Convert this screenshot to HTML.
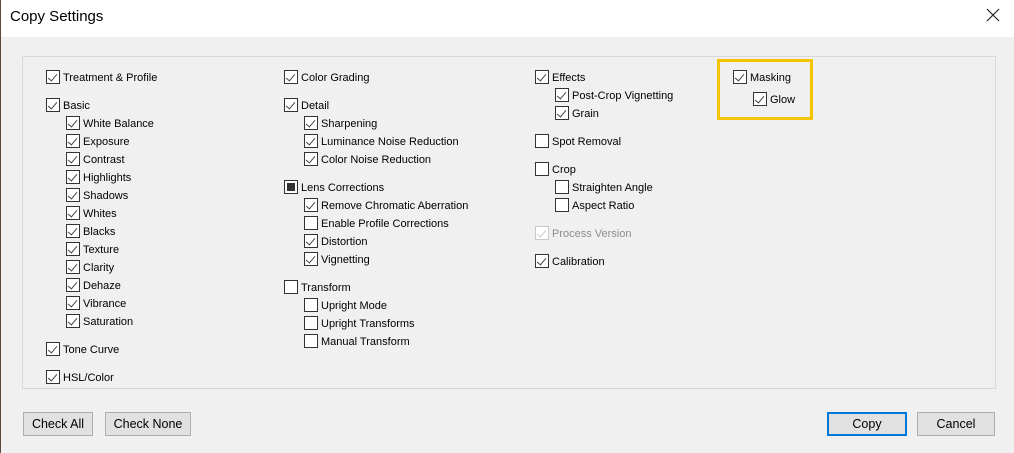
<!DOCTYPE html>
<html><head><meta charset="utf-8"><style>
*{margin:0;padding:0;box-sizing:border-box}
body{width:1014px;height:453px;background:#f0f0f0;position:relative;overflow:hidden;font-family:"Liberation Sans",sans-serif;font-size:11px;color:#000}
.title{position:absolute;left:0;top:0;width:1014px;height:37px;background:#fff}
.title span{position:absolute;left:10px;top:8px;font-size:15px}
.x{position:absolute;right:14px;top:8px}
.lb{position:absolute;left:0;top:0;width:1px;height:453px;background:#5a4a3a}
.panel{position:absolute;left:22px;top:56px;width:974px;height:333px;border:1px solid #d9d9d9}
.c{position:absolute;height:18px;line-height:20px;white-space:nowrap;padding-left:17px}
.c i{position:absolute;left:0;top:2px;width:14px;height:14px;border:1px solid #333;background:#fff}
.c.k i::after{content:"";position:absolute;left:3px;top:1px;width:4px;height:8px;border-right:1.5px solid #444;border-bottom:1.5px solid #444;transform:rotate(40deg)}
.c.m i::after{content:"";position:absolute;left:2px;top:2px;width:8px;height:8px;background:#333}
.c.d{color:#8c8c8c}
.c.d i{border-color:#c8c8c8}
.c.d i::after{border-color:#c8c8c8}
.hl{position:absolute;left:717px;top:59px;width:96px;height:61px;border:3px solid #f5c400}
.b{position:absolute;top:412px;height:24px;border:1px solid #adadad;background:#e1e1e1;text-align:center;line-height:22px;font-size:12.5px}
</style></head><body>
<div class="title"><span>Copy Settings</span>
<svg class="x" width="14" height="14" viewBox="0 0 14 14"><path d="M1 1L13 13M13 1L1 13" stroke="#222" stroke-width="1.2"/></svg></div>
<div class="lb"></div>
<div class="panel"></div>
<div class="hl"></div>

<div class="c k" style="left:46px;top:68px"><i></i>Treatment &amp; Profile</div>
<div class="c k" style="left:46px;top:96px"><i></i>Basic</div>
<div class="c k" style="left:66px;top:114px"><i></i>White Balance</div>
<div class="c k" style="left:66px;top:132px"><i></i>Exposure</div>
<div class="c k" style="left:66px;top:150px"><i></i>Contrast</div>
<div class="c k" style="left:66px;top:168px"><i></i>Highlights</div>
<div class="c k" style="left:66px;top:186px"><i></i>Shadows</div>
<div class="c k" style="left:66px;top:204px"><i></i>Whites</div>
<div class="c k" style="left:66px;top:222px"><i></i>Blacks</div>
<div class="c k" style="left:66px;top:240px"><i></i>Texture</div>
<div class="c k" style="left:66px;top:258px"><i></i>Clarity</div>
<div class="c k" style="left:66px;top:276px"><i></i>Dehaze</div>
<div class="c k" style="left:66px;top:294px"><i></i>Vibrance</div>
<div class="c k" style="left:66px;top:312px"><i></i>Saturation</div>
<div class="c k" style="left:46px;top:340px"><i></i>Tone Curve</div>
<div class="c k" style="left:46px;top:368px"><i></i>HSL/Color</div>

<div class="c k" style="left:284px;top:68px"><i></i>Color Grading</div>
<div class="c k" style="left:284px;top:96px"><i></i>Detail</div>
<div class="c k" style="left:304px;top:114px"><i></i>Sharpening</div>
<div class="c k" style="left:304px;top:132px"><i></i>Luminance Noise Reduction</div>
<div class="c k" style="left:304px;top:150px"><i></i>Color Noise Reduction</div>
<div class="c m" style="left:284px;top:178px"><i></i>Lens Corrections</div>
<div class="c k" style="left:304px;top:196px"><i></i>Remove Chromatic Aberration</div>
<div class="c" style="left:304px;top:214px"><i></i>Enable Profile Corrections</div>
<div class="c k" style="left:304px;top:232px"><i></i>Distortion</div>
<div class="c k" style="left:304px;top:250px"><i></i>Vignetting</div>
<div class="c" style="left:284px;top:278px"><i></i>Transform</div>
<div class="c" style="left:304px;top:296px"><i></i>Upright Mode</div>
<div class="c" style="left:304px;top:314px"><i></i>Upright Transforms</div>
<div class="c" style="left:304px;top:332px"><i></i>Manual Transform</div>

<div class="c k" style="left:535px;top:68px"><i></i>Effects</div>
<div class="c k" style="left:555px;top:86px"><i></i>Post-Crop Vignetting</div>
<div class="c k" style="left:555px;top:104px"><i></i>Grain</div>
<div class="c" style="left:535px;top:132px"><i></i>Spot Removal</div>
<div class="c" style="left:535px;top:160px"><i></i>Crop</div>
<div class="c" style="left:555px;top:178px"><i></i>Straighten Angle</div>
<div class="c" style="left:555px;top:196px"><i></i>Aspect Ratio</div>
<div class="c k d" style="left:535px;top:224px"><i></i>Process Version</div>
<div class="c k" style="left:535px;top:252px"><i></i>Calibration</div>

<div class="c k" style="left:733px;top:68px"><i></i>Masking</div>
<div class="c k" style="left:753px;top:90px"><i></i>Glow</div>

<div class="b" style="left:23px;width:70px">Check All</div>
<div class="b" style="left:105px;width:86px">Check None</div>
<div class="b" style="left:827px;width:80px;border:2px solid #0078d7;line-height:20px">Copy</div>
<div class="b" style="left:917px;width:78px">Cancel</div>
</body></html>
